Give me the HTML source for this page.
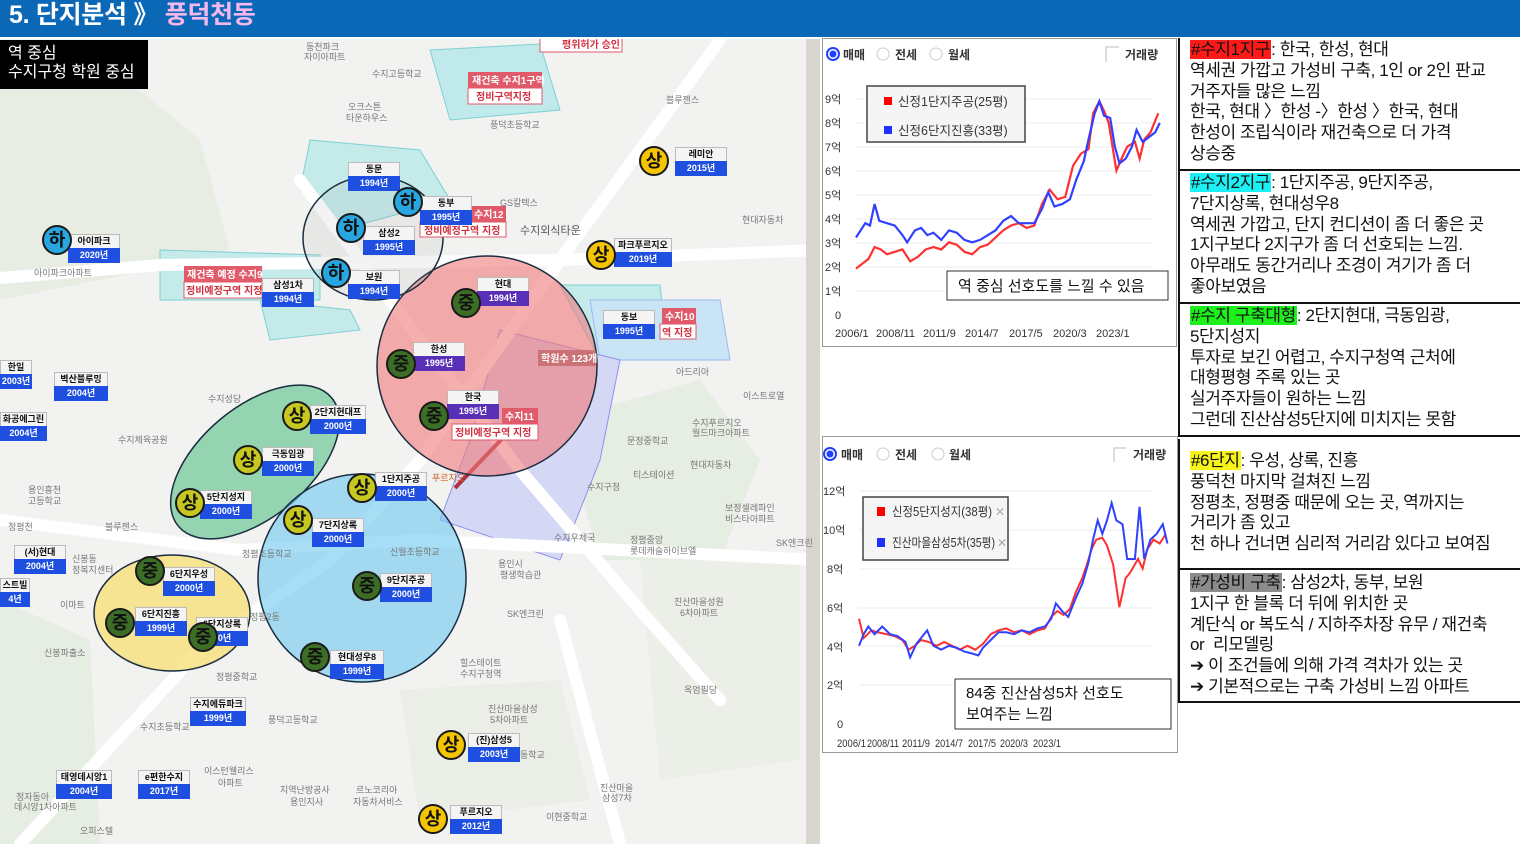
<!DOCTYPE html>
<html><head><meta charset="utf-8"><style>
*{margin:0;padding:0;box-sizing:border-box}
body{width:1520px;height:844px;overflow:hidden;background:#fff;font-family:"Liberation Sans","Noto Sans CJK KR",sans-serif;position:relative}
.hdr{position:absolute;left:0;top:0;width:1520px;height:37px;background:#0b68b6;color:#fff;font-size:25px;font-weight:bold;padding:0 0 0 9px;line-height:30px;letter-spacing:-0.3px}
.hdr span{color:#f4b8ec}
.map{position:absolute;left:0;top:39px;width:820px;height:805px;overflow:hidden;background:#f2f2f1}
.note{position:absolute;left:0;top:40px;width:148px;height:49px;background:#000;color:#fff;font-size:16px;line-height:19px;padding:4px 8px}
.chart{position:absolute;border:1px solid #999;background:#fff;font-size:12px;color:#333}
.rp{position:absolute;left:1178px;width:342px;border-left:2px solid #111;border-bottom:2px solid #111;font-size:17px;line-height:20.8px;color:#111;padding:2px 0 0 10px;letter-spacing:-0.4px}
.hl{padding:0 1px}
</style></head><body>
<div class="hdr">5. 단지분석 》 <span>풍덕천동</span></div>

<div class="map">
<svg width="820" height="805" viewBox="0 39 820 805" xmlns="http://www.w3.org/2000/svg" font-family="Liberation Sans, Noto Sans CJK KR, sans-serif">
<rect x="0" y="39" width="820" height="805" fill="#f2f2f1"/>
<path d="M0 90 L140 90 L200 140 L230 250 L150 270 L0 300Z" fill="#e8ede4"/>
<path d="M0 600 L90 640 L100 844 L0 844Z" fill="#e6ede2"/>
<path d="M560 420 L700 380 L760 460 L720 560 L600 560Z" fill="#e6ede2"/>
<path d="M640 560 L800 560 L800 760 L660 780Z" fill="#ecefe8"/>
<path d="M400 690 L560 680 L590 800 L420 820Z" fill="#eaeee6"/>
<path d="M430 50 L540 44 L560 110 L450 120Z" fill="#bfe9ea" stroke="#7fd0d3"/>
<path d="M310 140 L420 150 L450 200 L340 230 L300 190Z" fill="#c4eaea" stroke="#7fd0d3"/>
<path d="M160 250 L320 255 L320 300 L160 300Z" fill="#c4eaea" stroke="#7fd0d3"/>
<path d="M260 300 L350 310 L360 330 L270 340Z" fill="#c4eaea" stroke="#7fd0d3"/>
<path d="M560 285 L660 285 L665 330 L600 360Z" fill="#c4eaea" stroke="#7fd0d3"/>
<path d="M590 300 L720 300 L730 360 L600 360Z" fill="#c8e4f5" stroke="#9fb9f0"/>
<path d="M500 330 L620 360 L600 460 L560 560 L440 520 L470 440Z" fill="#d4d8f5" stroke="#8f8ff0"/>
<g stroke="#fff" stroke-width="12" fill="none" stroke-linecap="round">
<path d="M0 278 L160 265 L560 260 L820 250"/>
<path d="M720 40 L560 260 L420 460 L330 560"/>
<path d="M300 180 L420 340 L520 470 L640 610 L720 700"/>
<path d="M0 520 L240 550 L420 540 L820 560"/>
<path d="M20 844 L200 650 L330 560"/>
<path d="M560 620 L620 844"/>
</g>
<rect x="806" y="39" width="14" height="805" fill="#d8d6cf"/>
<path d="M455 488 L520 420" stroke="#b03040" stroke-width="4"/>
<ellipse cx="255" cy="462" rx="100" ry="55" transform="rotate(-40 255 462)" fill="#55bf86" fill-opacity=".6" stroke="#1a2d40" stroke-width="1.5"/>
<ellipse cx="172" cy="613" rx="78" ry="58" fill="#f7df73" fill-opacity=".75" stroke="#1a2d40" stroke-width="1.5"/>
<circle cx="362" cy="578" r="104" fill="#6cc8f0" fill-opacity=".6" stroke="#1a2d40" stroke-width="1.5"/>
<circle cx="487" cy="366" r="110" fill="#f07a7a" fill-opacity=".6" stroke="#1a2d40" stroke-width="1.5"/>
<ellipse cx="373" cy="238" rx="70" ry="62" fill="#9a9a9a" fill-opacity=".12" stroke="#1a2d40" stroke-width="1.5"/>
<g font-size="10" font-weight="bold">
<rect x="468" y="72" width="74" height="16" fill="#e05a6a"/><text x="472" y="84" fill="#fff">재건축 수지1구역</text>
<rect x="468" y="88" width="74" height="16" fill="#fff" stroke="#e05a6a"/><text x="476" y="100" fill="#d03040">정비구역지정</text>
<rect x="184" y="266" width="78" height="16" fill="#e05a6a"/><text x="187" y="278" fill="#fff">재건축 예정 수지9</text>
<rect x="184" y="282" width="78" height="16" fill="#fff" stroke="#e05a6a"/><text x="186" y="294" fill="#d03040">정비예정구역 지정</text>
<rect x="470" y="206" width="36" height="16" fill="#e05a6a"/><text x="474" y="218" fill="#fff">수지12</text>
<rect x="420" y="222" width="86" height="15" fill="#fff" stroke="#e05a6a"/><text x="424" y="234" fill="#d03040">정비예정구역 지정</text>
<rect x="662" y="308" width="34" height="16" fill="#e05a6a"/><text x="665" y="320" fill="#fff">수지10</text>
<rect x="660" y="324" width="36" height="15" fill="#fff" stroke="#e05a6a"/><text x="662" y="336" fill="#d03040">역 지정</text>
<rect x="502" y="408" width="36" height="16" fill="#e05a6a"/><text x="505" y="420" fill="#fff">수지11</text>
<rect x="452" y="424" width="86" height="16" fill="#fff" stroke="#e05a6a"/><text x="455" y="436" fill="#d03040">정비예정구역 지정</text>
<rect x="538" y="350" width="58" height="16" fill="#c06060" fill-opacity=".7"/><text x="541" y="362" fill="#fff">학원수 123개</text>
<rect x="540" y="38" width="82" height="14" fill="#fff" stroke="#e05a6a"/><text x="562" y="48" fill="#d03040">평위허가 승인</text>
</g>
<g font-size="9" fill="#777">
<text x="306" y="50">동천파크</text><text x="304" y="60">자이아파트</text>
<text x="372" y="77">수지고등학교</text><text x="348" y="110">오크스튼</text><text x="346" y="121">타운하우스</text>
<text x="490" y="128">풍덕초등학교</text><text x="666" y="103">블루젠스</text>
<text x="520" y="234" font-size="11" fill="#555">수지외식타운</text><text x="500" y="206">GS칼텍스</text>
<text x="742" y="223">현대자동차</text><text x="676" y="375">아드리아</text><text x="743" y="399">이스트로열</text>
<text x="692" y="426">수지푸르지오</text><text x="692" y="436">월드마크아파트</text>
<text x="627" y="444">문정중학교</text><text x="633" y="478">티스테이션</text><text x="690" y="468">현대자동차</text>
<text x="587" y="490">수지구청</text><text x="554" y="541">수지우체국</text><text x="630" y="543">정평중앙</text><text x="630" y="554">롯데캐슬하이브엘</text>
<text x="725" y="511">보정셀레파인</text><text x="725" y="522">비스타아파트</text><text x="776" y="546">SK엔크린</text>
<text x="498" y="567">용인시</text><text x="500" y="578">평생학습관</text><text x="507" y="617">SK엔크린</text>
<text x="674" y="605">진산마을성원</text><text x="680" y="616">6차아파트</text><text x="684" y="693">옥엄필당</text>
<text x="460" y="666">힐스테이트</text><text x="460" y="677">수지구청역</text>
<text x="488" y="712">진산마을삼성</text><text x="490" y="723">5차아파트</text><text x="520" y="758">동학교</text>
<text x="600" y="791">진산마을</text><text x="602" y="801">삼성7차</text><text x="546" y="820">이현중학교</text>
<text x="280" y="793">지역난방공사</text><text x="290" y="805">용인지사</text><text x="356" y="793">르노코리아</text><text x="353" y="805">자동차서비스</text>
<text x="204" y="774">이스턴웰리스</text><text x="218" y="786">아파트</text><text x="80" y="834">오피스텔</text>
<text x="16" y="800">정자동아</text><text x="14" y="810">데시앙1차아파트</text>
<text x="140" y="730">수지초등학교</text><text x="268" y="723">풍덕고등학교</text><text x="195" y="706">정평공원</text>
<text x="28" y="493">용인흥천</text><text x="28" y="504">고등학교</text><text x="8" y="530">정평천</text><text x="105" y="530">블루젠스</text>
<text x="72" y="562">신봉동</text><text x="72" y="573">정복지센터</text><text x="60" y="608">이마트</text><text x="44" y="656">신봉파출소</text>
<text x="34" y="276">아이파크아파트</text><text x="208" y="402">수지성당</text><text x="118" y="443">수지체육공원</text>
<text x="242" y="557">정평초등학교</text><text x="390" y="555">신월초등학교</text><text x="250" y="620">정평2동</text>
<text x="216" y="680">정평중학교</text><text x="432" y="481" fill="#d06020">푸르지오</text>
</g>
</svg>
</div>

<div class="note">역 중심<br>수지구청 학원 중심</div>

<div class="chart" style="left:822px;top:38px;width:355px;height:309px">
<svg width="355" height="309" viewBox="822 38 355 309" font-family="Liberation Sans, Noto Sans CJK KR, sans-serif">
<circle cx="832" cy="53" r="6" fill="#fff" stroke="#2040ff" stroke-width="2"/><circle cx="832" cy="53" r="3.5" fill="#2040ff"/>
<text x="842" y="58" font-size="12" font-weight="bold" fill="#333">매매</text>
<circle cx="882" cy="53" r="6" fill="#fff" stroke="#ccc"/><text x="894" y="58" font-size="12" font-weight="bold" fill="#333">전세</text>
<circle cx="935" cy="53" r="6" fill="#fff" stroke="#ccc"/><text x="947" y="58" font-size="12" font-weight="bold" fill="#333">월세</text>
<path d="M1105 61 L1105 46 L1118 46" fill="none" stroke="#bbb"/><text x="1124" y="58" font-size="12" font-weight="bold" fill="#333">거래량</text>
<g font-size="11" fill="#333">
<text x="824" y="102">9억</text><text x="824" y="126">8억</text><text x="824" y="150">7억</text><text x="824" y="174">6억</text><text x="824" y="198">5억</text><text x="824" y="222">4억</text><text x="824" y="246">3억</text><text x="824" y="270">2억</text><text x="824" y="294">1억</text><text x="834" y="318">0</text>
</g>
<g stroke="#eee"><line x1="855" y1="98" x2="1152" y2="98"/><line x1="855" y1="122" x2="1152" y2="122"/><line x1="855" y1="146" x2="1152" y2="146"/><line x1="855" y1="170" x2="1152" y2="170"/><line x1="855" y1="194" x2="1152" y2="194"/><line x1="855" y1="218" x2="1152" y2="218"/><line x1="855" y1="242" x2="1152" y2="242"/><line x1="855" y1="266" x2="1152" y2="266"/><line x1="855" y1="290" x2="1152" y2="290"/></g>
<g font-size="11" fill="#333"><text x="834" y="336">2006/1</text><text x="875" y="336">2008/11</text><text x="922" y="336">2011/9</text><text x="964" y="336">2014/7</text><text x="1008" y="336">2017/5</text><text x="1052" y="336">2020/3</text><text x="1095" y="336">2023/1</text></g>
<g transform="translate(855,313) scale(15.5,-23.9)" fill="none" stroke-width="2.2">
<polyline vector-effect="non-scaling-stroke" stroke="#ff3030" points="0,1.9 .4,2.1 .8,2.3 1.2,2.8 1.6,2.7 2,2.5 2.5,2.6 3,2.7 3.5,2.2 4,2.4 4.5,2.7 5,2.8 5.5,2.7 6,3.0 6.5,2.9 7,2.6 7.5,2.5 8,2.8 8.5,2.9 9,3.2 9.5,3.5 10,3.7 10.5,3.8 11,3.6 11.5,3.7 12,4.6 12.5,5.2 13,4.8 13.5,4.9 14,6.2 14.5,6.7 15,6.9 15.3,8.4 15.7,8.9 16,8.5 16.3,8.0 16.8,6.0 17.2,6.6 17.5,7.0 18,7.2 18.3,6.5 18.6,7.3 19,7.6 19.5,8.4"/>
<polyline vector-effect="non-scaling-stroke" stroke="#3040ff" points="0,3.2 .3,3.5 .6,3.8 .9,3.7 1.2,4.6 1.5,3.9 2,3.8 2.5,3.7 3,3.3 3.3,3.0 3.8,3.5 4.2,3.6 4.6,3.3 5,3.4 5.5,3.1 6,3.5 6.5,3.4 7,3.1 7.5,3.0 8,3.1 8.5,3.3 9,3.5 9.5,3.9 10,4.1 10.5,3.8 11,3.8 11.5,3.8 12,4.4 12.4,5.1 12.8,4.5 13.3,4.6 13.8,4.8 14.2,5.6 14.7,6.4 15,7.3 15.4,8.4 15.7,8.9 16,8.3 16.4,8.2 16.7,7.0 17,6.3 17.4,6.5 17.8,7.0 18.1,7.7 18.5,7.2 18.9,7.4 19.3,7.6 19.6,8.0"/>
</g>
<rect x="866" y="85" width="158" height="56" fill="#f5f5f5" stroke="#444" stroke-width="1.5"/>
<rect x="883" y="96" width="8" height="8" fill="#f00"/><text x="897" y="105" font-size="12.5" fill="#333">신정1단지주공(25평)</text>
<rect x="883" y="125" width="8" height="8" fill="#2030ff"/><text x="897" y="134" font-size="12.5" fill="#333">신정6단지진흥(33평)</text>
<rect x="946" y="270" width="221" height="29" fill="#fff" stroke="#333"/>
<text x="957" y="290" font-size="15" fill="#111">역 중심 선호도를 느낄 수 있음</text>
</svg></div>

<div class="chart" style="left:822px;top:436px;width:356px;height:317px">
<svg width="356" height="317" viewBox="822 436 356 317" font-family="Liberation Sans, Noto Sans CJK KR, sans-serif">
<circle cx="829" cy="453" r="6" fill="#fff" stroke="#2040ff" stroke-width="2"/><circle cx="829" cy="453" r="3.5" fill="#2040ff"/>
<text x="840" y="458" font-size="12" font-weight="bold" fill="#333">매매</text>
<circle cx="882" cy="453" r="6" fill="#fff" stroke="#ccc"/><text x="894" y="458" font-size="12" font-weight="bold" fill="#333">전세</text>
<circle cx="937" cy="453" r="6" fill="#fff" stroke="#ccc"/><text x="948" y="458" font-size="12" font-weight="bold" fill="#333">월세</text>
<path d="M1113 461 L1113 447 L1125 447" fill="none" stroke="#bbb"/><text x="1132" y="458" font-size="12" font-weight="bold" fill="#333">거래량</text>
<g font-size="11" fill="#333"><text x="822" y="494">12억</text><text x="822" y="533">10억</text><text x="826" y="572">8억</text><text x="826" y="611">6억</text><text x="826" y="650">4억</text><text x="826" y="688">2억</text><text x="836" y="727">0</text></g>
<g stroke="#eee"><line x1="858" y1="490" x2="1152" y2="490"/><line x1="858" y1="529" x2="1152" y2="529"/><line x1="858" y1="568" x2="1152" y2="568"/><line x1="858" y1="607" x2="1152" y2="607"/><line x1="858" y1="645" x2="1152" y2="645"/><line x1="858" y1="684" x2="1152" y2="684"/></g>
<g font-size="11" fill="#333"><text x="836" y="746" textLength="29" lengthAdjust="spacingAndGlyphs">2006/1</text><text x="866" y="746" textLength="32" lengthAdjust="spacingAndGlyphs">2008/11</text><text x="901" y="746" textLength="28" lengthAdjust="spacingAndGlyphs">2011/9</text><text x="934" y="746" textLength="28" lengthAdjust="spacingAndGlyphs">2014/7</text><text x="967" y="746" textLength="28" lengthAdjust="spacingAndGlyphs">2017/5</text><text x="999" y="746" textLength="28" lengthAdjust="spacingAndGlyphs">2020/3</text><text x="1032" y="746" textLength="28" lengthAdjust="spacingAndGlyphs">2023/1</text></g>
<g transform="translate(858,722) scale(15.5,-19.3)" fill="none" stroke-width="2">
<polyline vector-effect="non-scaling-stroke" stroke="#ff3030" points="0,5.4 .3,4.4 .8,4.8 1.2,4.7 1.8,4.6 2.3,4.5 2.8,4.3 3.2,3.8 3.6,4.0 4,4.3 4.5,4.2 5,4.0 5.5,4.2 6,4.0 6.5,3.8 7,4.0 7.5,3.8 8,4.1 8.5,4.6 9,4.8 9.5,4.9 10,4.7 10.5,4.8 11,4.6 11.5,4.8 12,4.9 12.4,5.5 12.8,5.8 13.2,5.6 13.6,5.9 14,6.8 14.4,7.5 14.7,8.2 15,9.0 15.3,9.5 15.7,9.6 16,9.2 16.4,8.2 16.8,6.0 17.2,7.5 17.5,7.8 18,8.5 18.3,8.0 18.6,9.0 19,9.5 19.4,9.3 19.8,9.8"/>
<polyline vector-effect="non-scaling-stroke" stroke="#3040ff" points="0,4.0 .3,4.6 .6,5.0 1,4.6 1.5,5.0 2,4.6 2.5,4.5 3,4.2 3.3,3.4 3.7,4.1 4.1,4.5 4.4,4.8 4.8,4.0 5.3,3.8 5.8,4.0 6.3,3.9 6.8,3.7 7.3,3.6 7.7,3.5 8,3.9 8.5,4.3 9,4.7 9.5,4.7 10,4.6 10.5,4.8 11,4.7 11.5,4.9 12,5.0 12.4,5.4 12.7,6.2 13.1,5.8 13.5,5.5 14,6.5 14.4,7.2 14.8,8.3 15.1,9.5 15.4,10.5 15.7,9.8 16,10.5 16.3,11.4 16.6,10.5 17,10.3 17.3,8.5 17.8,8.5 18.1,11.2 18.4,8.5 18.8,9.5 19.2,9.8 19.6,10.3 19.9,9.3"/>
</g>
<rect x="862" y="496" width="145" height="63" fill="#f5f5f5" stroke="#444" stroke-width="1.5"/>
<rect x="876" y="506" width="8" height="9" fill="#f00"/><text x="891" y="515" font-size="12.5" fill="#333" textLength="100" lengthAdjust="spacingAndGlyphs">신정5단지성지(38평)</text><text x="994" y="515" font-size="12" fill="#aaa">✕</text>
<rect x="876" y="537" width="8" height="9" fill="#2030ff"/><text x="891" y="546" font-size="12.5" fill="#333" textLength="103" lengthAdjust="spacingAndGlyphs">진산마을삼성5차(35평)</text><text x="996" y="546" font-size="12" fill="#aaa">✕</text>
<rect x="954" y="678" width="216" height="50" fill="#fff" stroke="#333"/>
<text x="965" y="697" font-size="15" fill="#111">84중 진산삼성5차 선호도</text>
<text x="965" y="718" font-size="15" fill="#111">보여주는 느낌</text>
</svg></div>

<div class="rp" style="top:38px;height:133px"><span class="hl" style="background:#ff1a1a">#수지1지구</span>: 한국, 한성, 현대<br>역세권 가깝고 가성비 구축, 1인 or 2인 판교<br>거주자들 많은 느낌<br>한국, 현대 〉한성 -〉한성 〉한국, 현대<br>한성이 조립식이라 재건축으로 더 가격<br>상승중</div>
<div class="rp" style="top:171px;height:133px"><span class="hl" style="background:#1cf0f4">#수지2지구</span>: 1단지주공, 9단지주공,<br>7단지상록, 현대성우8<br>역세권 가깝고, 단지 컨디션이 좀 더 좋은 곳<br>1지구보다 2지구가 좀 더 선호되는 느낌.<br>아무래도 동간거리나 조경이 겨기가 좀 더<br>좋아보였음</div>
<div class="rp" style="top:304px;height:133px"><span class="hl" style="background:#1ef01e">#수지 구축대형</span>: 2단지현대, 극동임광,<br>5단지성지<br>투자로 보긴 어렵고, 수지구청역 근처에<br>대형평형 주록 있는 곳<br>실거주자들이 원하는 느낌<br>그런데 진산삼성5단지에 미치지는 못함</div>
<div class="rp" style="top:439px;height:131px;padding-top:12px"><span class="hl" style="background:#f6f41a">#6단지</span>: 우성, 상록, 진흥<br>풍덕천 마지막 걸쳐진 느낌<br>정평초, 정평중 때문에 오는 곳, 역까지는<br>거리가 좀 있고<br>천 하나 건너면 심리적 거리감 있다고 보여짐</div>
<div class="rp" style="top:570px;height:133px;padding-top:3px"><span class="hl" style="background:#8c8c8c">#가성비 구축</span>: 삼성2차, 동부, 보원<br>1지구 한 블록 더 뒤에 위치한 곳<br>계단식 or 복도식 / 지하주차장 유무 / 재건축<br>or &nbsp;리모델링<br>➔ 이 조건들에 의해 가격 격차가 있는 곳<br>➔ 기본적으로는 구축 가성비 느낌 아파트</div>

<style>
.lb{position:absolute;width:52px;height:29px;font-size:9px;font-weight:bold;text-align:center;line-height:13px;font-family:"Liberation Sans","Noto Sans CJK KR",sans-serif}
.lb .n{background:#f4f4f4;color:#111;height:14px;border:1px solid #bbb;border-bottom:none}
.lb .y{background:#1f4fe0;color:#fff;height:15px;line-height:15px}
.bd{position:absolute;width:30px;height:30px;border-radius:50%;border:2px solid #1a1a1a;text-align:center;line-height:26px;font-size:18px;font-weight:bold;font-family:"Liberation Sans","Noto Sans CJK KR",sans-serif}
.h{background:#27a6e0;color:#111}.s{background:#f5c400;color:#111}.j{background:#3c6e26;color:#111}.o{background:#c6c820;color:#111}
</style>
<div class="lb" style="left:68px;top:234px"><div class="n">아이파크</div><div class="y">2020년</div></div>
<div class="lb" style="left:348px;top:162px"><div class="n">동문</div><div class="y">1994년</div></div>
<div class="lb" style="left:420px;top:196px"><div class="n">동부</div><div class="y">1995년</div></div>
<div class="lb" style="left:363px;top:226px"><div class="n">삼성2</div><div class="y">1995년</div></div>
<div class="lb" style="left:348px;top:270px"><div class="n">보원</div><div class="y">1994년</div></div>
<div class="lb" style="left:262px;top:278px"><div class="n">삼성1차</div><div class="y">1994년</div></div>
<div class="lb" style="left:675px;top:147px"><div class="n">레미안</div><div class="y">2015년</div></div>
<div class="lb" style="left:614px;top:238px;width:58px"><div class="n">파크푸르지오</div><div class="y">2019년</div></div>
<div class="lb" style="left:477px;top:277px"><div class="n">현대</div><div class="y" style="background:#5a2fb8">1994년</div></div>
<div class="lb" style="left:413px;top:342px"><div class="n">한성</div><div class="y" style="background:#5a2fb8">1995년</div></div>
<div class="lb" style="left:447px;top:390px"><div class="n">한국</div><div class="y" style="background:#5a2fb8">1995년</div></div>
<div class="lb" style="left:603px;top:310px"><div class="n">동보</div><div class="y">1995년</div></div>
<div class="lb" style="left:310px;top:405px;width:56px"><div class="n">2단지현대프</div><div class="y">2000년</div></div>
<div class="lb" style="left:262px;top:447px"><div class="n">극동임광</div><div class="y">2000년</div></div>
<div class="lb" style="left:200px;top:490px"><div class="n">5단지성지</div><div class="y">2000년</div></div>
<div class="lb" style="left:375px;top:472px"><div class="n">1단지주공</div><div class="y">2000년</div></div>
<div class="lb" style="left:312px;top:518px"><div class="n">7단지상록</div><div class="y">2000년</div></div>
<div class="lb" style="left:380px;top:573px"><div class="n">9단지주공</div><div class="y">2000년</div></div>
<div class="lb" style="left:330px;top:650px;width:54px"><div class="n">현대성우8</div><div class="y">1999년</div></div>
<div class="lb" style="left:163px;top:567px"><div class="n">6단지우성</div><div class="y">2000년</div></div>
<div class="lb" style="left:135px;top:607px"><div class="n">6단지진흥</div><div class="y">1999년</div></div>
<div class="lb" style="left:196px;top:617px"><div class="n">6단지상록</div><div class="y">00년</div></div>
<div class="lb" style="left:468px;top:733px"><div class="n">(진)삼성5</div><div class="y">2003년</div></div>
<div class="lb" style="left:450px;top:805px"><div class="n">푸르지오</div><div class="y">2012년</div></div>
<div class="lb" style="left:0px;top:360px;width:32px"><div class="n">한일</div><div class="y">2003년</div></div>
<div class="lb" style="left:54px;top:372px;width:54px"><div class="n">벽산블루밍</div><div class="y">2004년</div></div>
<div class="lb" style="left:0px;top:412px;width:47px"><div class="n">화공에그린</div><div class="y">2004년</div></div>
<div class="lb" style="left:14px;top:545px"><div class="n">(서)현대</div><div class="y">2004년</div></div>
<div class="lb" style="left:0px;top:578px;width:30px"><div class="n">스트빌</div><div class="y">4년</div></div>
<div class="lb" style="left:190px;top:697px;width:56px"><div class="n">수지에듀파크</div><div class="y">1999년</div></div>
<div class="lb" style="left:56px;top:770px;width:56px"><div class="n">태영데시앙1</div><div class="y">2004년</div></div>
<div class="lb" style="left:138px;top:770px"><div class="n">e편한수지</div><div class="y">2017년</div></div>
<div class="bd h" style="left:42px;top:225px">하</div>
<div class="bd h" style="left:393px;top:187px">하</div>
<div class="bd h" style="left:336px;top:213px">하</div>
<div class="bd h" style="left:321px;top:258px">하</div>
<div class="bd s" style="left:639px;top:146px">상</div>
<div class="bd s" style="left:586px;top:240px">상</div>
<div class="bd j" style="left:451px;top:288px">중</div>
<div class="bd j" style="left:386px;top:349px">중</div>
<div class="bd j" style="left:419px;top:401px">중</div>
<div class="bd o" style="left:282px;top:401px">상</div>
<div class="bd o" style="left:233px;top:445px">상</div>
<div class="bd o" style="left:175px;top:488px">상</div>
<div class="bd o" style="left:347px;top:473px">상</div>
<div class="bd o" style="left:283px;top:505px">상</div>
<div class="bd j" style="left:352px;top:571px">중</div>
<div class="bd j" style="left:300px;top:642px">중</div>
<div class="bd j" style="left:135px;top:556px">중</div>
<div class="bd j" style="left:105px;top:608px">중</div>
<div class="bd j" style="left:188px;top:622px">중</div>
<div class="bd s" style="left:436px;top:730px">상</div>
<div class="bd s" style="left:418px;top:804px">상</div>
</body></html>
